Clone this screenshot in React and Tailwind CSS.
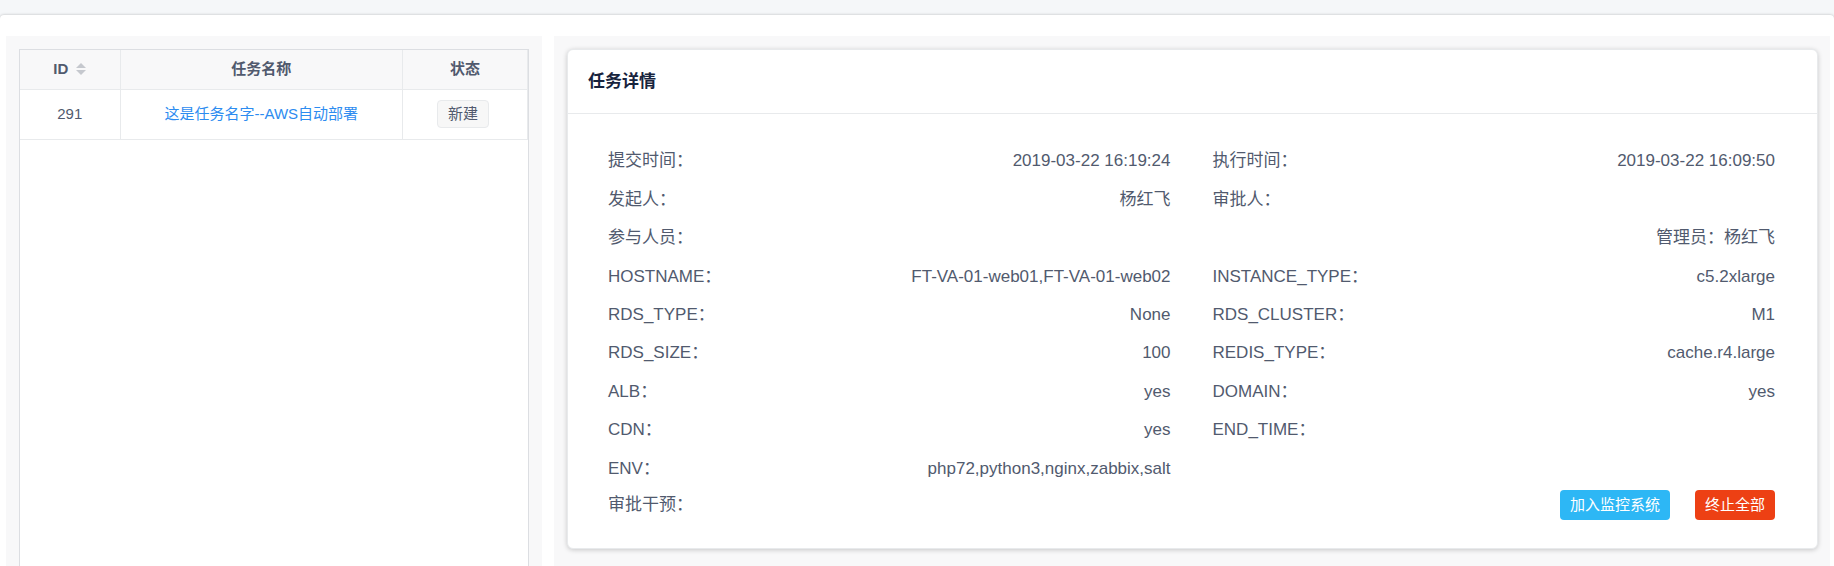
import React from "react";

const tasks = [{ id: 291, name: "这是任务名字--AWS自动部署", status: "新建" }];

const details = [
  { label: "提交时间", value: "2019-03-22 16:19:24" },
  { label: "执行时间", value: "2019-03-22 16:09:50" },
  { label: "发起人", value: "杨红飞" },
  { label: "审批人", value: "" },
  { label: "参与人员", value: "管理员：杨红飞", wide: true },
  { label: "HOSTNAME", value: "FT-VA-01-web01,FT-VA-01-web02" },
  { label: "INSTANCE_TYPE", value: "c5.2xlarge" },
  { label: "RDS_TYPE", value: "None" },
  { label: "RDS_CLUSTER", value: "M1" },
  { label: "RDS_SIZE", value: "100" },
  { label: "REDIS_TYPE", value: "cache.r4.large" },
  { label: "ALB", value: "yes" },
  { label: "DOMAIN", value: "yes" },
  { label: "CDN", value: "yes" },
  { label: "END_TIME", value: "" },
  { label: "ENV", value: "php72,python3,nginx,zabbix,salt" },
];

function SortIcon() {
  return (
    <svg width="10" height="12" viewBox="0 0 10 12" fill="#c5c8ce" aria-hidden="true">
      <path d="M5 0L10 5H0Z" />
      <path d="M5 12L10 7H0Z" />
    </svg>
  );
}

function TaskTable() {
  return (
    <div className="flex-1 border-t border-r border-l border-[#dcdee2] bg-white">
      <table className="w-full table-fixed border-collapse text-center text-[15px] leading-5">
        <colgroup>
          <col className="w-[100px]" />
          <col />
          <col className="w-[125px]" />
        </colgroup>
        <thead className="bg-[#f8f8f9]">
          <tr className="h-[39px] border-b border-[#e8eaec]">
            <th className="border-r border-[#e8eaec] font-bold">
              <button type="button" className="inline-flex items-center gap-2">
                ID
                <SortIcon />
              </button>
            </th>
            <th className="border-r border-[#e8eaec] font-bold">任务名称</th>
            <th className="border-r border-[#e8eaec] font-bold">状态</th>
          </tr>
        </thead>
        <tbody>
          {tasks.map((task) => (
            <tr key={task.id} className="h-[50px] border-b border-[#e8eaec]">
              <td className="border-r border-[#e8eaec]">{task.id}</td>
              <td className="border-r border-[#e8eaec]">
                <a href="#task" className="text-[#2d8cf0]">
                  {task.name}
                </a>
              </td>
              <td className="border-r border-[#e8eaec]">
                <span className="mr-1 inline-block rounded border border-[#e8eaec] bg-[#f7f7f7] px-2.5 py-[3px] leading-5">
                  {task.status}
                </span>
              </td>
            </tr>
          ))}
        </tbody>
      </table>
    </div>
  );
}

function TaskDetails() {
  return (
    <section className="rounded-md border border-[#e8eaec] bg-white shadow-[0_1px_5px_rgba(0,0,0,0.2)]">
      <header className="flex h-16 items-center border-b border-[#e8eaec] px-5">
        <h2 className="text-[17px] leading-6 font-bold text-[#17233d]">任务详情</h2>
      </header>
      <div className="pt-7 pr-[42px] pb-7 pl-10 text-[17px] leading-6">
        <dl className="mb-0.5 grid min-h-[346px] auto-rows-fr grid-cols-2 gap-x-[42px]">
          {details.map((item) => (
            <div
              key={item.label}
              className={item.wide ? "col-span-2 flex items-center justify-between" : "flex items-center justify-between"}
            >
              <dt>{item.label}：</dt>
              <dd>{item.value}</dd>
            </div>
          ))}
        </dl>
        <div className="flex items-center justify-between">
          <span>审批干预：</span>
          <div className="flex gap-[25px] text-[15px] leading-5 text-white">
            <button type="button" className="rounded bg-[#2db7f5] px-2.5 py-[5px]">
              加入监控系统
            </button>
            <button type="button" className="rounded bg-[#ed4014] px-2.5 py-[5px]">
              终止全部
            </button>
          </div>
        </div>
      </div>
    </section>
  );
}

export default function App() {
  return (
    <div
      lang="zh-CN"
      className="flex min-h-screen flex-col bg-[#f5f7f9] pt-[15px] font-['Liberation_Sans','Noto_Sans_CJK_SC',sans-serif] text-[#515a6e]"
    >
      <main className="grid flex-1 grid-cols-[536fr_1276fr] gap-3 rounded-t bg-white pt-[21px] pr-1 pl-1.5 shadow-[0_0_3px_rgba(0,0,0,0.25)]">
        <div className="flex flex-col bg-[#f8f8f9] px-[13px] pt-[13px]">
          <TaskTable />
        </div>
        <div className="bg-[#f8f8f9] pt-[13px] pr-3 pb-[13px] pl-[13px]">
          <TaskDetails />
        </div>
      </main>
    </div>
  );
}
